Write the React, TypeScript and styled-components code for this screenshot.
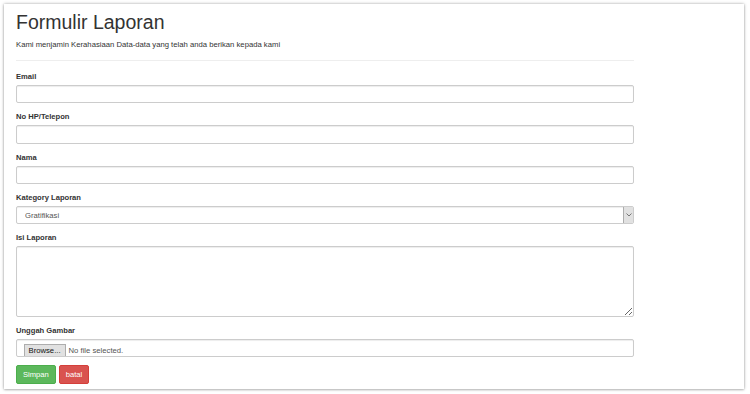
import React from "react";
import styled, { createGlobalStyle } from "styled-components";

const Global = createGlobalStyle`
  html, body { margin: 0; padding: 0; background: #fff; }
  body { font-family: "Liberation Sans", Arial, sans-serif; color: #333; }
  * { box-sizing: border-box; }
`;

const Page = styled.div`
  width: 750px;
  height: 394px;
  padding: 4px 6px 5px 4px;
`;

const Card = styled.div`
  background: #fff;
  height: 385px;
  padding: 8px 12px 0 12px;
  box-shadow: 0 0 3px rgba(0, 0, 0, 0.35), 0 1px 2px rgba(0, 0, 0, 0.15);
`;

const Form = styled.form`
  width: 618px;
  display: flex;
  flex-direction: column;
`;

const Title = styled.h1`
  margin: 0 0 5.5px 0;
  font-size: 19.5px;
  line-height: 21px;
  font-weight: 500;
  color: #333;
`;

const Lead = styled.p`
  margin: 0;
  font-size: 7.7px;
  line-height: 11px;
  color: #333;
`;

const Rule = styled.hr`
  margin: 10.5px 0 10px 0;
  border: 0;
  border-top: 1px solid #eee;
  height: 0;
`;

const Group = styled.div`
  display: flex;
  flex-direction: column;
  margin-bottom: 8px;
`;

const Label = styled.label`
  font-size: 7.6px;
  line-height: 11px;
  font-weight: 700;
  color: #333;
  margin-bottom: 3px;
`;

const Input = styled.input`
  display: block;
  width: 100%;
  height: 18.3px;
  padding: 3px 6.5px;
  font-family: inherit;
  font-size: 7.7px;
  color: #555;
  background: #fff;
  border: 1px solid #ccc;
  border-radius: 2px;
  box-shadow: inset 0 1px 1px rgba(0, 0, 0, 0.075);
  outline: none;
`;

const TextArea = styled.textarea`
  display: block;
  width: 100%;
  height: 71px;
  padding: 3px 6.5px;
  font-family: inherit;
  font-size: 7.7px;
  color: #555;
  border: 1px solid #ccc;
  border-radius: 2px;
  box-shadow: inset 0 1px 1px rgba(0, 0, 0, 0.075);
  resize: vertical;
  outline: none;
`;

const SelectBox = styled.div`
  display: flex;
  height: 18.3px;
  border: 1px solid #ccc;
  border-radius: 2px;
  box-shadow: inset 0 1px 1px rgba(0, 0, 0, 0.075);
  overflow: hidden;
`;

const Select = styled.select`
  flex: 1;
  appearance: none;
  -webkit-appearance: none;
  border: 0;
  background: transparent;
  padding: 0 0 0 8px;
  font-family: inherit;
  font-size: 7.7px;
  color: #555;
  outline: none;
`;

const Arrow = styled.span`
  width: 10px;
  display: flex;
  align-items: center;
  justify-content: center;
  background: #e1e1e1;
  border-left: 1px solid #adadad;
  color: #666;
`;

const FileBox = styled.div`
  display: flex;
  align-items: flex-start;
  height: 18.3px;
  padding: 3.5px 0 0 6.5px;
  border: 1px solid #ccc;
  border-radius: 2px;
  box-shadow: inset 0 1px 1px rgba(0, 0, 0, 0.075);
  overflow: hidden;
`;

const Browse = styled.button`
  height: 17px;
  padding: 0 4px 3px;
  font-family: inherit;
  font-size: 7.7px;
  color: #111;
  background: #e1e1e1;
  border: 1px solid #adadad;
  border-radius: 0;
`;

const FileText = styled.span`
  margin-left: 3px;
  font-size: 7.7px;
  line-height: 14px;
  color: #555;
`;

const Actions = styled.div`
  display: flex;
  gap: 3px;
`;

const Btn = styled.button<{ $tone: "ok" | "cancel" }>`
  height: 19px;
  padding: 0 6px;
  font-family: inherit;
  font-size: 7.6px;
  color: #fff;
  border-radius: 2px;
  border: 1px solid ${(p) => (p.$tone === "ok" ? "#4cae4c" : "#d43f3a")};
  background: ${(p) => (p.$tone === "ok" ? "#5cb85c" : "#d9534f")};
`;

export default function App() {
  return (
    <>
      <Global />
      <Page>
        <Card>
          <Title>Formulir Laporan</Title>
          <Lead>Kami menjamin Kerahasiaan Data-data yang telah anda berikan kepada kami</Lead>
          <Form onSubmit={(e) => e.preventDefault()}>
            <Rule />
            <Group>
              <Label>Email</Label>
              <Input type="email" />
            </Group>
            <Group>
              <Label>No HP/Telepon</Label>
              <Input type="text" />
            </Group>
            <Group>
              <Label>Nama</Label>
              <Input type="text" />
            </Group>
            <Group>
              <Label>Kategory Laporan</Label>
              <SelectBox>
                <Select defaultValue="Gratifikasi">
                  <option>Gratifikasi</option>
                </Select>
                <Arrow>
                  <svg width="6" height="4" viewBox="0 0 6 4">
                    <path d="M0.5 0.5 L3 3 L5.5 0.5" fill="none" stroke="#777" strokeWidth="1" />
                  </svg>
                </Arrow>
              </SelectBox>
            </Group>
            <Group>
              <Label>Isi Laporan</Label>
              <TextArea />
            </Group>
            <Group>
              <Label>Unggah Gambar</Label>
              <FileBox>
                <Browse type="button">Browse...</Browse>
                <FileText>No file selected.</FileText>
              </FileBox>
            </Group>
            <Actions>
              <Btn $tone="ok" type="submit">Simpan</Btn>
              <Btn $tone="cancel" type="button">batal</Btn>
            </Actions>
          </Form>
        </Card>
      </Page>
    </>
  );
}
